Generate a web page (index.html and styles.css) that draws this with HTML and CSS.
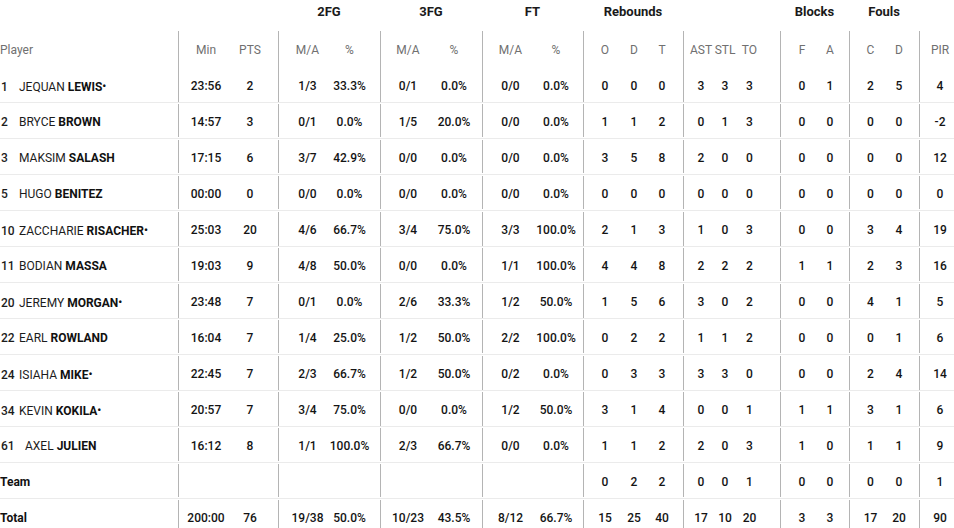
FILE: index.html
```html
<!DOCTYPE html>
<html lang="en">
<head>
<meta charset="utf-8">
<title>Box score</title>
<link rel="stylesheet" href="styles.css">
</head>
<body>
<div class="box">
  <div class="groups">
    <div></div><div></div>
    <div class="g">2FG</div><div class="g">3FG</div><div class="g">FT</div>
    <div class="g">Rebounds</div><div></div>
    <div class="g">Blocks</div><div class="g">Fouls</div><div></div>
  </div>
  <div class="row head">
    <div class="pl">Player</div><div>Min</div><div>PTS</div>
    <div>M/A</div><div>%</div><div>M/A</div><div>%</div><div>M/A</div><div>%</div>
    <div>O</div><div>D</div><div>T</div><div>AST</div><div>STL</div><div>TO</div>
    <div>F</div><div>A</div><div>C</div><div>D</div><div>PIR</div>
  </div>
  <div class="row">
    <div class="pl"><span class="no">1</span>JEQUAN <b>LEWIS<i>•</i></b></div><div>23:56</div><div>2</div>
    <div>1/3</div><div>33.3%</div><div>0/1</div><div>0.0%</div><div>0/0</div><div>0.0%</div>
    <div>0</div><div>0</div><div>0</div><div>3</div><div>3</div><div>3</div>
    <div>0</div><div>1</div><div>2</div><div>5</div><div>4</div>
  </div>
  <div class="row">
    <div class="pl"><span class="no">2</span>BRYCE <b>BROWN</b></div><div>14:57</div><div>3</div>
    <div>0/1</div><div>0.0%</div><div>1/5</div><div>20.0%</div><div>0/0</div><div>0.0%</div>
    <div>1</div><div>1</div><div>2</div><div>0</div><div>1</div><div>3</div>
    <div>0</div><div>0</div><div>0</div><div>0</div><div>-2</div>
  </div>
  <div class="row">
    <div class="pl"><span class="no">3</span>MAKSIM <b>SALASH</b></div><div>17:15</div><div>6</div>
    <div>3/7</div><div>42.9%</div><div>0/0</div><div>0.0%</div><div>0/0</div><div>0.0%</div>
    <div>3</div><div>5</div><div>8</div><div>2</div><div>0</div><div>0</div>
    <div>0</div><div>0</div><div>0</div><div>0</div><div>12</div>
  </div>
  <div class="row">
    <div class="pl"><span class="no">5</span>HUGO <b>BENITEZ</b></div><div>00:00</div><div>0</div>
    <div>0/0</div><div>0.0%</div><div>0/0</div><div>0.0%</div><div>0/0</div><div>0.0%</div>
    <div>0</div><div>0</div><div>0</div><div>0</div><div>0</div><div>0</div>
    <div>0</div><div>0</div><div>0</div><div>0</div><div>0</div>
  </div>
  <div class="row">
    <div class="pl"><span class="no">10</span>ZACCHARIE <b>RISACHER<i>•</i></b></div><div>25:03</div><div>20</div>
    <div>4/6</div><div>66.7%</div><div>3/4</div><div>75.0%</div><div>3/3</div><div>100.0%</div>
    <div>2</div><div>1</div><div>3</div><div>1</div><div>0</div><div>3</div>
    <div>0</div><div>0</div><div>3</div><div>4</div><div>19</div>
  </div>
  <div class="row">
    <div class="pl"><span class="no">11</span>BODIAN <b>MASSA</b></div><div>19:03</div><div>9</div>
    <div>4/8</div><div>50.0%</div><div>0/0</div><div>0.0%</div><div>1/1</div><div>100.0%</div>
    <div>4</div><div>4</div><div>8</div><div>2</div><div>2</div><div>2</div>
    <div>1</div><div>1</div><div>2</div><div>3</div><div>16</div>
  </div>
  <div class="row">
    <div class="pl"><span class="no">20</span>JEREMY <b>MORGAN<i>•</i></b></div><div>23:48</div><div>7</div>
    <div>0/1</div><div>0.0%</div><div>2/6</div><div>33.3%</div><div>1/2</div><div>50.0%</div>
    <div>1</div><div>5</div><div>6</div><div>3</div><div>0</div><div>2</div>
    <div>0</div><div>0</div><div>4</div><div>1</div><div>5</div>
  </div>
  <div class="row">
    <div class="pl"><span class="no">22</span>EARL <b>ROWLAND</b></div><div>16:04</div><div>7</div>
    <div>1/4</div><div>25.0%</div><div>1/2</div><div>50.0%</div><div>2/2</div><div>100.0%</div>
    <div>0</div><div>2</div><div>2</div><div>1</div><div>1</div><div>2</div>
    <div>0</div><div>0</div><div>0</div><div>1</div><div>6</div>
  </div>
  <div class="row">
    <div class="pl"><span class="no">24</span>ISIAHA <b>MIKE<i>•</i></b></div><div>22:45</div><div>7</div>
    <div>2/3</div><div>66.7%</div><div>1/2</div><div>50.0%</div><div>0/2</div><div>0.0%</div>
    <div>0</div><div>3</div><div>3</div><div>3</div><div>3</div><div>0</div>
    <div>0</div><div>0</div><div>2</div><div>4</div><div>14</div>
  </div>
  <div class="row">
    <div class="pl"><span class="no">34</span>KEVIN <b>KOKILA<i>•</i></b></div><div>20:57</div><div>7</div>
    <div>3/4</div><div>75.0%</div><div>0/0</div><div>0.0%</div><div>1/2</div><div>50.0%</div>
    <div>3</div><div>1</div><div>4</div><div>0</div><div>0</div><div>1</div>
    <div>1</div><div>1</div><div>3</div><div>1</div><div>6</div>
  </div>
  <div class="row">
    <div class="pl"><span class="no wide">61</span>AXEL <b>JULIEN</b></div><div>16:12</div><div>8</div>
    <div>1/1</div><div>100.0%</div><div>2/3</div><div>66.7%</div><div>0/0</div><div>0.0%</div>
    <div>1</div><div>1</div><div>2</div><div>2</div><div>0</div><div>3</div>
    <div>1</div><div>0</div><div>1</div><div>1</div><div>9</div>
  </div>
  <div class="row">
    <div class="pl"><b>Team</b></div><div></div><div></div>
    <div></div><div></div><div></div><div></div><div></div><div></div>
    <div>0</div><div>2</div><div>2</div><div>0</div><div>0</div><div>1</div>
    <div>0</div><div>0</div><div>0</div><div>0</div><div>1</div>
  </div>
  <div class="row">
    <div class="pl"><b>Total</b></div><div>200:00</div><div>76</div>
    <div>19/38</div><div>50.0%</div><div>10/23</div><div>43.5%</div><div>8/12</div><div>66.7%</div>
    <div>15</div><div>25</div><div>40</div><div>17</div><div>10</div><div>20</div>
    <div>3</div><div>3</div><div>17</div><div>20</div><div>90</div>
  </div>
</div>
</body>
</html>
```

FILE: styles.css
```css
html, body {
  margin: 0;
  padding: 0;
  background: #ffffff;
  overflow: hidden;
}

body {
  font-family: Roboto, "Liberation Sans", sans-serif;
  font-size: 12px;
  color: #111111;
}

.box {
  width: 954px;
}

.groups {
  display: grid;
  grid-template-columns: 178px 100px 102px 102px 101px 100px 97px 69px 70px 35px;
  height: 31px;
}

.groups .g {
  text-align: center;
  font-weight: bold;
  font-size: 13px;
  line-height: 24px;
  color: #1a1a1a;
}

.row {
  display: grid;
  grid-template-columns: 178px 50px 50px 50px 52px 51px 51px 51px 50px 37px 28px 35px 30px 24px 43px 36px 33px 36px 34px 35px;
  height: 36px;
  box-sizing: border-box;
  border-bottom: 1px solid #ebebeb;
}

.row > div {
  position: relative;
  text-align: center;
  padding-top: 4px;
  line-height: 31px;
  white-space: nowrap;
  box-sizing: border-box;
  font-weight: 500;
  color: #141414;
}

.row > .pl {
  text-align: left;
  font-weight: 400;
  color: #1c1c1c;
}

.head {
  border-bottom: none;
  height: 36px;
}

.head > div {
  padding-top: 2px;
  line-height: 34px;
  color: #707070;
  font-weight: 400;
}

.head > .pl {
  color: #707070;
}

/* group separators */
.row > :nth-child(2)::before,
.row > :nth-child(4)::before,
.row > :nth-child(6)::before,
.row > :nth-child(8)::before,
.row > :nth-child(10)::before,
.row > :nth-child(13)::before,
.row > :nth-child(16)::before,
.row > :nth-child(18)::before,
.row > :nth-child(20)::before {
  content: "";
  position: absolute;
  left: 0;
  top: 1px;
  bottom: 1px;
  width: 1px;
  background: #b4b4b4;
}

.head > div::before {
  top: 0 !important;
  bottom: 0 !important;
}

.head + .row > div::before {
  top: 0 !important;
}

/* column offsets inside groups */
.row > :nth-child(2) { padding-left: 6px; }
.row > :nth-child(3) { padding-right: 6px; }
.row > :nth-child(4) { padding-left: 9px; }
.row > :nth-child(5) { padding-right: 9px; }
.row > :nth-child(6) { padding-left: 5px; }
.row > :nth-child(7) { padding-right: 5px; }
.row > :nth-child(8) { padding-left: 6px; }
.row > :nth-child(9) { padding-right: 4px; }
.row > :nth-child(10) { padding-left: 7px; }
.row > :nth-child(12) { padding-right: 7px; }
.row > :nth-child(13) { padding-left: 6px; }
.row > :nth-child(15) { padding-right: 18px; }
.row > :nth-child(16) { padding-left: 8px; }
.row > :nth-child(17) { padding-right: 5px; }
.row > :nth-child(18) { padding-left: 7px; }
.row > :nth-child(19) { padding-right: 6px; }
.row > :nth-child(20) { padding-left: 7px; }

.no {
  display: inline-block;
  width: 19px;
  padding-left: 1px;
  box-sizing: border-box;
  font-weight: 500;
}

.no.wide {
  width: 25px;
}

.pl b {
  font-weight: bold;
  color: #111111;
}

.pl i {
  font-style: normal;
  font-size: 11px;
  vertical-align: 1px;
  margin-left: 0;
}
```
